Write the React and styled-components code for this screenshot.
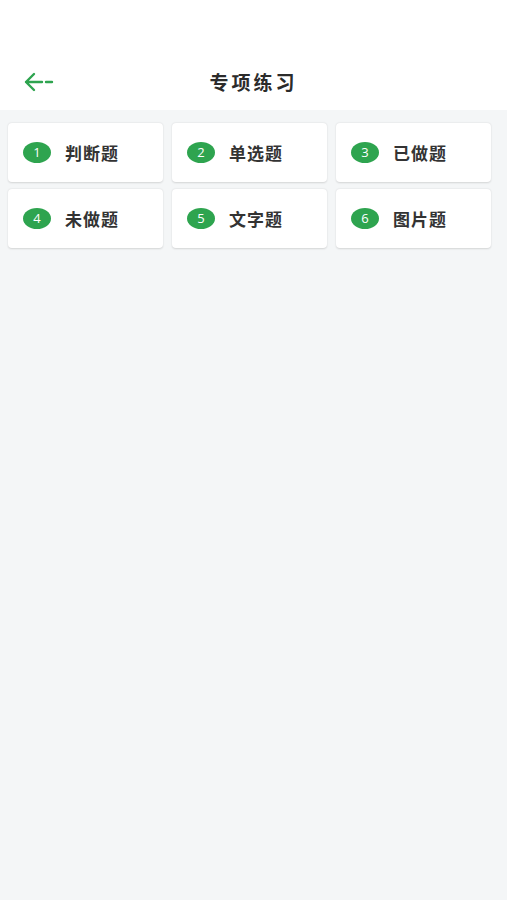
import styled, { createGlobalStyle } from "styled-components";

const Global = createGlobalStyle`
  html, body {
    margin: 0;
    padding: 0;
    background: #f4f6f7;
    font-family: "Noto Sans CJK SC", "Noto Sans", sans-serif;
  }
`;

const Page = styled.div`
  min-height: 900px;
  background: #f4f6f7;
`;

const Header = styled.header`
  height: 110px;
  background: #ffffff;
  display: grid;
  grid-template-columns: 80px 1fr 80px;
  align-items: end;
  padding-bottom: 13px;
  box-sizing: border-box;
`;

const Back = styled.button`
  border: none;
  background: none;
  padding: 0 0 0 24px;
  height: 30px;
  display: flex;
  align-items: center;
  cursor: pointer;
`;

const Title = styled.h1`
  margin: 0;
  text-align: center;
  font-size: 19px;
  letter-spacing: 3px;
  font-weight: 700;
  color: #2b2b2b;
  line-height: 30px;
`;

const Grid = styled.div`
  display: grid;
  grid-template-columns: repeat(3, 155px);
  gap: 7px 9px;
  padding: 13px 8px;
`;

const Card = styled.div`
  height: 59px;
  background: #ffffff;
  border-radius: 4px;
  box-shadow: 0 0.5px 2px rgba(0, 0, 0, 0.14);
  display: flex;
  align-items: center;
  padding-left: 15px;
  gap: 14px;
  box-sizing: border-box;
`;

const Badge = styled.span`
  display: block;
  flex: none;
  width: 28px;
  height: 21px;
  border-radius: 50%;
  background: #2ea44f;
  color: #ffffff;
  font-family: "Open Sans", "Noto Sans", sans-serif;
  font-size: 13px;
  font-weight: 500;
  line-height: 21px;
  text-align: center;
`;

const Label = styled.span`
  font-size: 17px;
  font-weight: 700;
  letter-spacing: 1px;
  color: #333333;
`;

const items = ["判断题", "单选题", "已做题", "未做题", "文字题", "图片题"];

export default function App() {
  return (
    <Page>
      <Global />
      <Header>
        <Back aria-label="返回">
          <svg width="30" height="20" viewBox="0 0 30 20" fill="none">
            <path
              d="M10 2 L2 10 L10 18 M2 10 H18 M22 10 H28"
              stroke="#2ea44f"
              strokeWidth="2.4"
              strokeLinecap="round"
              strokeLinejoin="round"
            />
          </svg>
        </Back>
        <Title>专项练习</Title>
        <div />
      </Header>
      <Grid>
        {items.map((t, i) => (
          <Card key={t}>
            <Badge>{i + 1}</Badge>
            <Label>{t}</Label>
          </Card>
        ))}
      </Grid>
    </Page>
  );
}
